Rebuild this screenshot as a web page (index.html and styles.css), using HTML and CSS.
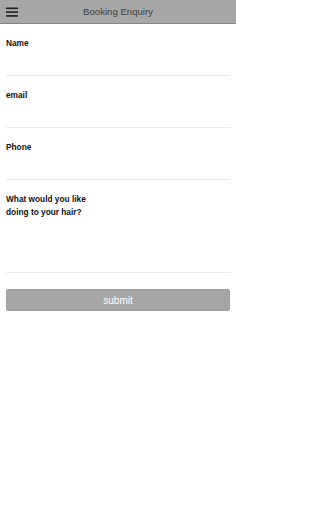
FILE: index.html
```html
<!DOCTYPE html>
<html>
<head>
<meta charset="utf-8">
<link rel="stylesheet" href="styles.css">
</head>
<body>
<div class="app">
<header class="topbar">
  <button class="menu-btn" aria-label="menu">
    <svg width="12" height="10" viewBox="0 0 12 10"><rect x="0" y="0.5" width="12" height="1.6" fill="#1e1e1e"/><rect x="0" y="4.3" width="12" height="1.6" fill="#1e1e1e"/><rect x="0" y="8.1" width="12" height="1.6" fill="#1e1e1e"/></svg>
  </button>
  <div class="title">Booking Enquiry</div>
</header>
<form class="form">
  <div class="field">
    <label class="label">Name</label>
    <input class="input" type="text">
  </div>
  <div class="field">
    <label class="label">email</label>
    <input class="input" type="email">
  </div>
  <div class="field">
    <label class="label">Phone</label>
    <input class="input" type="tel">
  </div>
  <div class="field">
    <label class="label">What would you like doing to your hair?</label>
    <textarea class="textarea"></textarea>
  </div>
  <button class="submit" type="button">submit</button>
</form>
</div>
</body>
</html>
```
FILE: styles.css
```css
html, body {
  margin: 0;
  padding: 0;
  background: #fff;
  font-family: "Liberation Sans", Arial, sans-serif;
}
.app {
  width: 236px;
}
.topbar {
  position: relative;
  height: 23px;
  background: #a7a7a7;
  border-bottom: 1px solid #858585;
  display: flex;
  align-items: center;
  justify-content: center;
}
.menu-btn {
  position: absolute;
  left: 6px;
  top: 7px;
  width: 12px;
  height: 10px;
  padding: 0;
  border: 0;
  background: none;
  display: block;
}
.menu-btn svg { display: block; }
.title {
  font-size: 9.6px;
  color: #3c3c3c;
  line-height: 23px;
}
.form {
  padding: 0 6px;
  display: flex;
  flex-direction: column;
}
.field {
  padding-top: 13px;
  border-bottom: 1px solid #e9e9e9;
  display: flex;
  flex-direction: column;
}
.label {
  font-size: 8.3px;
  font-weight: bold;
  line-height: 13px;
  color: #111;
  max-width: 96px;
}
.input, .textarea {
  border: 0;
  outline: 0;
  background: transparent;
  padding: 0;
  margin: 0;
  height: 25px;
  font-family: inherit;
  resize: none;
}
.textarea {
  height: 53px;
  display: block;
}
.submit {
  margin-top: 16px;
  height: 22px;
  background: #a6a6a6;
  border: 1px solid #a0a0a0;
  border-radius: 2px;
  color: #fff;
  font-family: inherit;
  font-size: 10px;
  padding: 0;
}
```
